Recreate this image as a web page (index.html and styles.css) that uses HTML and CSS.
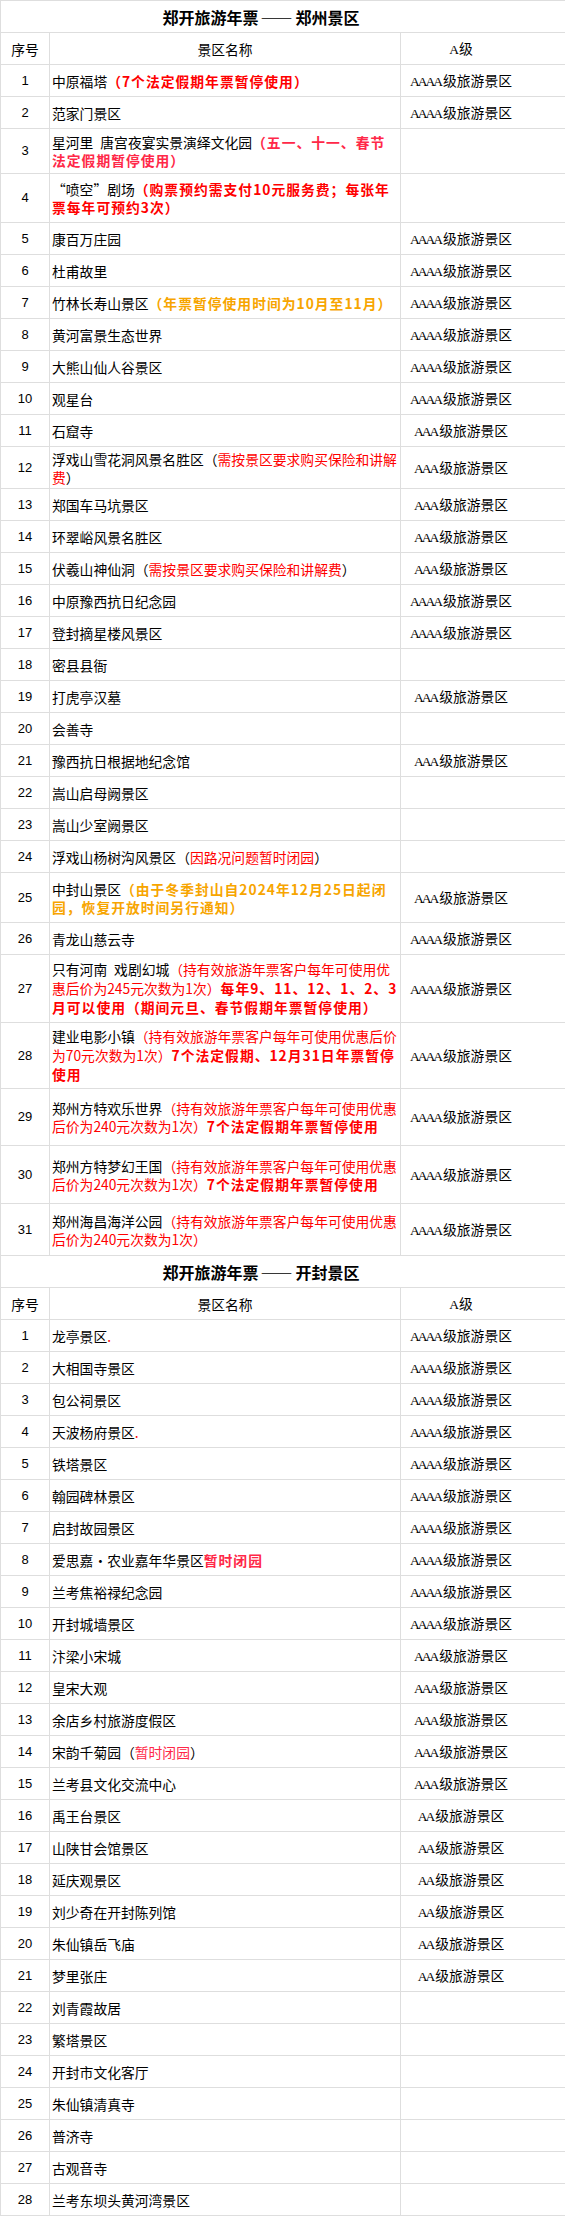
FILE: index.html
```html
<!DOCTYPE html>
<html lang="zh-CN">
<head>
<meta charset="utf-8">
<title>郑开旅游年票</title>
<link rel="stylesheet" href="styles.css">
</head>
<body>
<table class="sheet">
<colgroup><col class="c1"><col class="c2"><col class="c3"></colgroup>
<tbody>
<tr class="title"><td colspan="3">郑开旅游年票<span class="dash">——</span>郑州景区</td></tr>
<tr class="head"><td class="n">序号</td><td class="hc">景区名称</td><td class="lv"><span class="a">A</span>级</td></tr>
<tr><td class="n">1</td><td class="name">中原福塔<span class="rb">（7个法定假期年票暂停使用）</span></td><td class="lv"><span class="a">AAAA</span>级旅游景区</td></tr>
<tr><td class="n">2</td><td class="name">范家门景区</td><td class="lv"><span class="a">AAAA</span>级旅游景区</td></tr>
<tr class="h45"><td class="n">3</td><td class="name">星河里&ensp;唐宫夜宴实景演绎文化园<span class="pb">（五一、十一、春节<br>法定假期暂停使用）</span></td><td class="lv"></td></tr>
<tr class="h49"><td class="n">4</td><td class="name">“喷空”剧场<span class="rb">（购票预约需支付10元服务费；每张年<br>票每年可预约3次）</span></td><td class="lv"></td></tr>
<tr><td class="n">5</td><td class="name">康百万庄园</td><td class="lv"><span class="a">AAAA</span>级旅游景区</td></tr>
<tr><td class="n">6</td><td class="name">杜甫故里</td><td class="lv"><span class="a">AAAA</span>级旅游景区</td></tr>
<tr><td class="n">7</td><td class="name">竹林长寿山景区<span class="ob">（年票暂停使用时间为10月至11月）</span></td><td class="lv"><span class="a">AAAA</span>级旅游景区</td></tr>
<tr><td class="n">8</td><td class="name">黄河富景生态世界</td><td class="lv"><span class="a">AAAA</span>级旅游景区</td></tr>
<tr><td class="n">9</td><td class="name">大熊山仙人谷景区</td><td class="lv"><span class="a">AAAA</span>级旅游景区</td></tr>
<tr><td class="n">10</td><td class="name">观星台</td><td class="lv"><span class="a">AAAA</span>级旅游景区</td></tr>
<tr><td class="n">11</td><td class="name">石窟寺</td><td class="lv"><span class="a">AAA</span>级旅游景区</td></tr>
<tr class="h42"><td class="n">12</td><td class="name">浮戏山雪花洞风景名胜区（<span class="r">需按景区要求购买保险和讲解<br>费</span>）</td><td class="lv"><span class="a">AAA</span>级旅游景区</td></tr>
<tr><td class="n">13</td><td class="name">郑国车马坑景区</td><td class="lv"><span class="a">AAA</span>级旅游景区</td></tr>
<tr><td class="n">14</td><td class="name">环翠峪风景名胜区</td><td class="lv"><span class="a">AAA</span>级旅游景区</td></tr>
<tr><td class="n">15</td><td class="name">伏羲山神仙洞（<span class="r">需按景区要求购买保险和讲解费</span>）</td><td class="lv"><span class="a">AAA</span>级旅游景区</td></tr>
<tr><td class="n">16</td><td class="name">中原豫西抗日纪念园</td><td class="lv"><span class="a">AAAA</span>级旅游景区</td></tr>
<tr><td class="n">17</td><td class="name">登封摘星楼风景区</td><td class="lv"><span class="a">AAAA</span>级旅游景区</td></tr>
<tr><td class="n">18</td><td class="name">密县县衙</td><td class="lv"></td></tr>
<tr><td class="n">19</td><td class="name">打虎亭汉墓</td><td class="lv"><span class="a">AAA</span>级旅游景区</td></tr>
<tr><td class="n">20</td><td class="name">会善寺</td><td class="lv"></td></tr>
<tr><td class="n">21</td><td class="name">豫西抗日根据地纪念馆</td><td class="lv"><span class="a">AAA</span>级旅游景区</td></tr>
<tr><td class="n">22</td><td class="name">嵩山启母阙景区</td><td class="lv"></td></tr>
<tr><td class="n">23</td><td class="name">嵩山少室阙景区</td><td class="lv"></td></tr>
<tr><td class="n">24</td><td class="name">浮戏山杨树沟风景区（<span class="r">因路况问题暂时闭园</span>）</td><td class="lv"></td></tr>
<tr class="h50"><td class="n">25</td><td class="name">中封山景区<span class="ob">（由于冬季封山自2024年12月25日起闭<br>园，恢复开放时间另行通知）</span></td><td class="lv"><span class="a">AAA</span>级旅游景区</td></tr>
<tr><td class="n">26</td><td class="name">青龙山慈云寺</td><td class="lv"><span class="a">AAAA</span>级旅游景区</td></tr>
<tr class="h68 tall"><td class="n">27</td><td class="name">只有河南&ensp;戏剧幻城<span class="r">（持有效旅游年票客户每年可使用优<br>惠后价为245元次数为1次）</span><span class="rb">每年9、11、12、1、2、3<br>月可以使用（期间元旦、春节假期年票暂停使用）</span></td><td class="lv"><span class="a">AAAA</span>级旅游景区</td></tr>
<tr class="h66 tall"><td class="n">28</td><td class="name">建业电影小镇<span class="r">（持有效旅游年票客户每年可使用优惠后价<br>为70元次数为1次）</span><span class="rb">7个法定假期、12月31日年票暂停<br>使用</span></td><td class="lv"><span class="a">AAAA</span>级旅游景区</td></tr>
<tr class="h57"><td class="n">29</td><td class="name">郑州方特欢乐世界<span class="r">（持有效旅游年票客户每年可使用优惠<br>后价为240元次数为1次）</span><span class="rb">7个法定假期年票暂停使用</span></td><td class="lv"><span class="a">AAAA</span>级旅游景区</td></tr>
<tr class="h58"><td class="n">30</td><td class="name">郑州方特梦幻王国<span class="r">（持有效旅游年票客户每年可使用优惠<br>后价为240元次数为1次）</span><span class="rb">7个法定假期年票暂停使用</span></td><td class="lv"><span class="a">AAAA</span>级旅游景区</td></tr>
<tr class="h52"><td class="n">31</td><td class="name">郑州海昌海洋公园<span class="r">（持有效旅游年票客户每年可使用优惠<br>后价为240元次数为1次）</span></td><td class="lv"><span class="a">AAAA</span>级旅游景区</td></tr>
</tbody>
<tbody>
<tr class="title"><td colspan="3">郑开旅游年票<span class="dash">——</span>开封景区</td></tr>
<tr class="head"><td class="n">序号</td><td class="hc">景区名称</td><td class="lv"><span class="a">A</span>级</td></tr>
<tr><td class="n">1</td><td class="name">龙亭景区<span class="r">.</span></td><td class="lv"><span class="a">AAAA</span>级旅游景区</td></tr>
<tr><td class="n">2</td><td class="name">大相国寺景区</td><td class="lv"><span class="a">AAAA</span>级旅游景区</td></tr>
<tr><td class="n">3</td><td class="name">包公祠景区</td><td class="lv"><span class="a">AAAA</span>级旅游景区</td></tr>
<tr><td class="n">4</td><td class="name">天波杨府景区<span class="r">.</span></td><td class="lv"><span class="a">AAAA</span>级旅游景区</td></tr>
<tr><td class="n">5</td><td class="name">铁塔景区</td><td class="lv"><span class="a">AAAA</span>级旅游景区</td></tr>
<tr><td class="n">6</td><td class="name">翰园碑林景区</td><td class="lv"><span class="a">AAAA</span>级旅游景区</td></tr>
<tr><td class="n">7</td><td class="name">启封故园景区</td><td class="lv"><span class="a">AAAA</span>级旅游景区</td></tr>
<tr><td class="n">8</td><td class="name">爱思嘉·农业嘉年华景区<span class="pb">暂时闭园</span></td><td class="lv"><span class="a">AAAA</span>级旅游景区</td></tr>
<tr><td class="n">9</td><td class="name">兰考焦裕禄纪念园</td><td class="lv"><span class="a">AAAA</span>级旅游景区</td></tr>
<tr><td class="n">10</td><td class="name">开封城墙景区</td><td class="lv"><span class="a">AAAA</span>级旅游景区</td></tr>
<tr><td class="n">11</td><td class="name">汴梁小宋城</td><td class="lv"><span class="a">AAA</span>级旅游景区</td></tr>
<tr><td class="n">12</td><td class="name">皇宋大观</td><td class="lv"><span class="a">AAA</span>级旅游景区</td></tr>
<tr><td class="n">13</td><td class="name">余店乡村旅游度假区</td><td class="lv"><span class="a">AAA</span>级旅游景区</td></tr>
<tr><td class="n">14</td><td class="name">宋韵千菊园（<span class="p">暂时闭园</span>）</td><td class="lv"><span class="a">AAA</span>级旅游景区</td></tr>
<tr><td class="n">15</td><td class="name">兰考县文化交流中心</td><td class="lv"><span class="a">AAA</span>级旅游景区</td></tr>
<tr><td class="n">16</td><td class="name">禹王台景区</td><td class="lv"><span class="a">AA</span>级旅游景区</td></tr>
<tr><td class="n">17</td><td class="name">山陕甘会馆景区</td><td class="lv"><span class="a">AA</span>级旅游景区</td></tr>
<tr><td class="n">18</td><td class="name">延庆观景区</td><td class="lv"><span class="a">AA</span>级旅游景区</td></tr>
<tr><td class="n">19</td><td class="name">刘少奇在开封陈列馆</td><td class="lv"><span class="a">AA</span>级旅游景区</td></tr>
<tr><td class="n">20</td><td class="name">朱仙镇岳飞庙</td><td class="lv"><span class="a">AA</span>级旅游景区</td></tr>
<tr><td class="n">21</td><td class="name">梦里张庄</td><td class="lv"><span class="a">AA</span>级旅游景区</td></tr>
<tr><td class="n">22</td><td class="name">刘青霞故居</td><td class="lv"></td></tr>
<tr><td class="n">23</td><td class="name">繁塔景区</td><td class="lv"></td></tr>
<tr><td class="n">24</td><td class="name">开封市文化客厅</td><td class="lv"></td></tr>
<tr><td class="n">25</td><td class="name">朱仙镇清真寺</td><td class="lv"></td></tr>
<tr><td class="n">26</td><td class="name">普济寺</td><td class="lv"></td></tr>
<tr><td class="n">27</td><td class="name">古观音寺</td><td class="lv"></td></tr>
<tr><td class="n">28</td><td class="name">兰考东坝头黄河湾景区</td><td class="lv"></td></tr>
</tbody>
</table>
</body>
</html>
```
FILE: styles.css
```css
html, body {
  margin: 0;
  padding: 0;
  background: #ffffff;
}

body {
  font-family: "Noto Sans CJK SC", "Noto Sans", sans-serif;
  color: #000000;
}

.sheet {
  width: 565px;
  border-collapse: collapse;
  table-layout: fixed;
}

.c1 { width: 49px; }
.c2 { width: 351px; }
.c3 { width: 165px; }

.sheet td {
  border: 1px solid #dedede;
  padding: 0;
  height: 31px;
  vertical-align: middle;
  font-size: 13.8px;
  line-height: 18px;
  white-space: nowrap;
}

.sheet tr { height: 32px; }

.title td {
  text-align: center;
  font-size: 16px;
  font-weight: bold;
  padding-right: 44px;
}

.dash {
  letter-spacing: 3px;
  margin-left: 2px;
}

.n {
  text-align: center;
  font-family: "Liberation Sans", "Noto Sans CJK SC", sans-serif;
}

.sheet .n { font-size: 13px; }
.head .n { font-family: "Noto Sans CJK SC", sans-serif; font-size: 13.8px; }

.hc { text-align: center; }

.name {
  padding-left: 2px !important;
  text-align: left;
}

.lv {
  text-align: center;
  padding-right: 44px !important;
}

.a {
  font-family: "Liberation Serif", serif;
  font-size: 13.5px;
  letter-spacing: -2px;
  margin-right: 2px;
}

.r { color: #ff0000; }
.p { color: #ff2848; }
.rb { color: #ff0000; font-weight: bold; letter-spacing: 1px; }
.pb { color: #ff2848; font-weight: bold; letter-spacing: 1px; }
.ob { color: #f7a500; font-weight: bold; letter-spacing: 1px; }

.tall td { line-height: 19px; }

.sheet .h42 td { height: 41px; }
.sheet .h45 td { height: 44px; }
.sheet .h49 td { height: 48px; }
.sheet .h50 td { height: 49px; }
.sheet .h52 td { height: 51px; }
.sheet .h57 td { height: 56px; }
.sheet .h58 td { height: 57px; }
.sheet .h66 td { height: 65px; }
.sheet .h68 td { height: 67px; }
```
